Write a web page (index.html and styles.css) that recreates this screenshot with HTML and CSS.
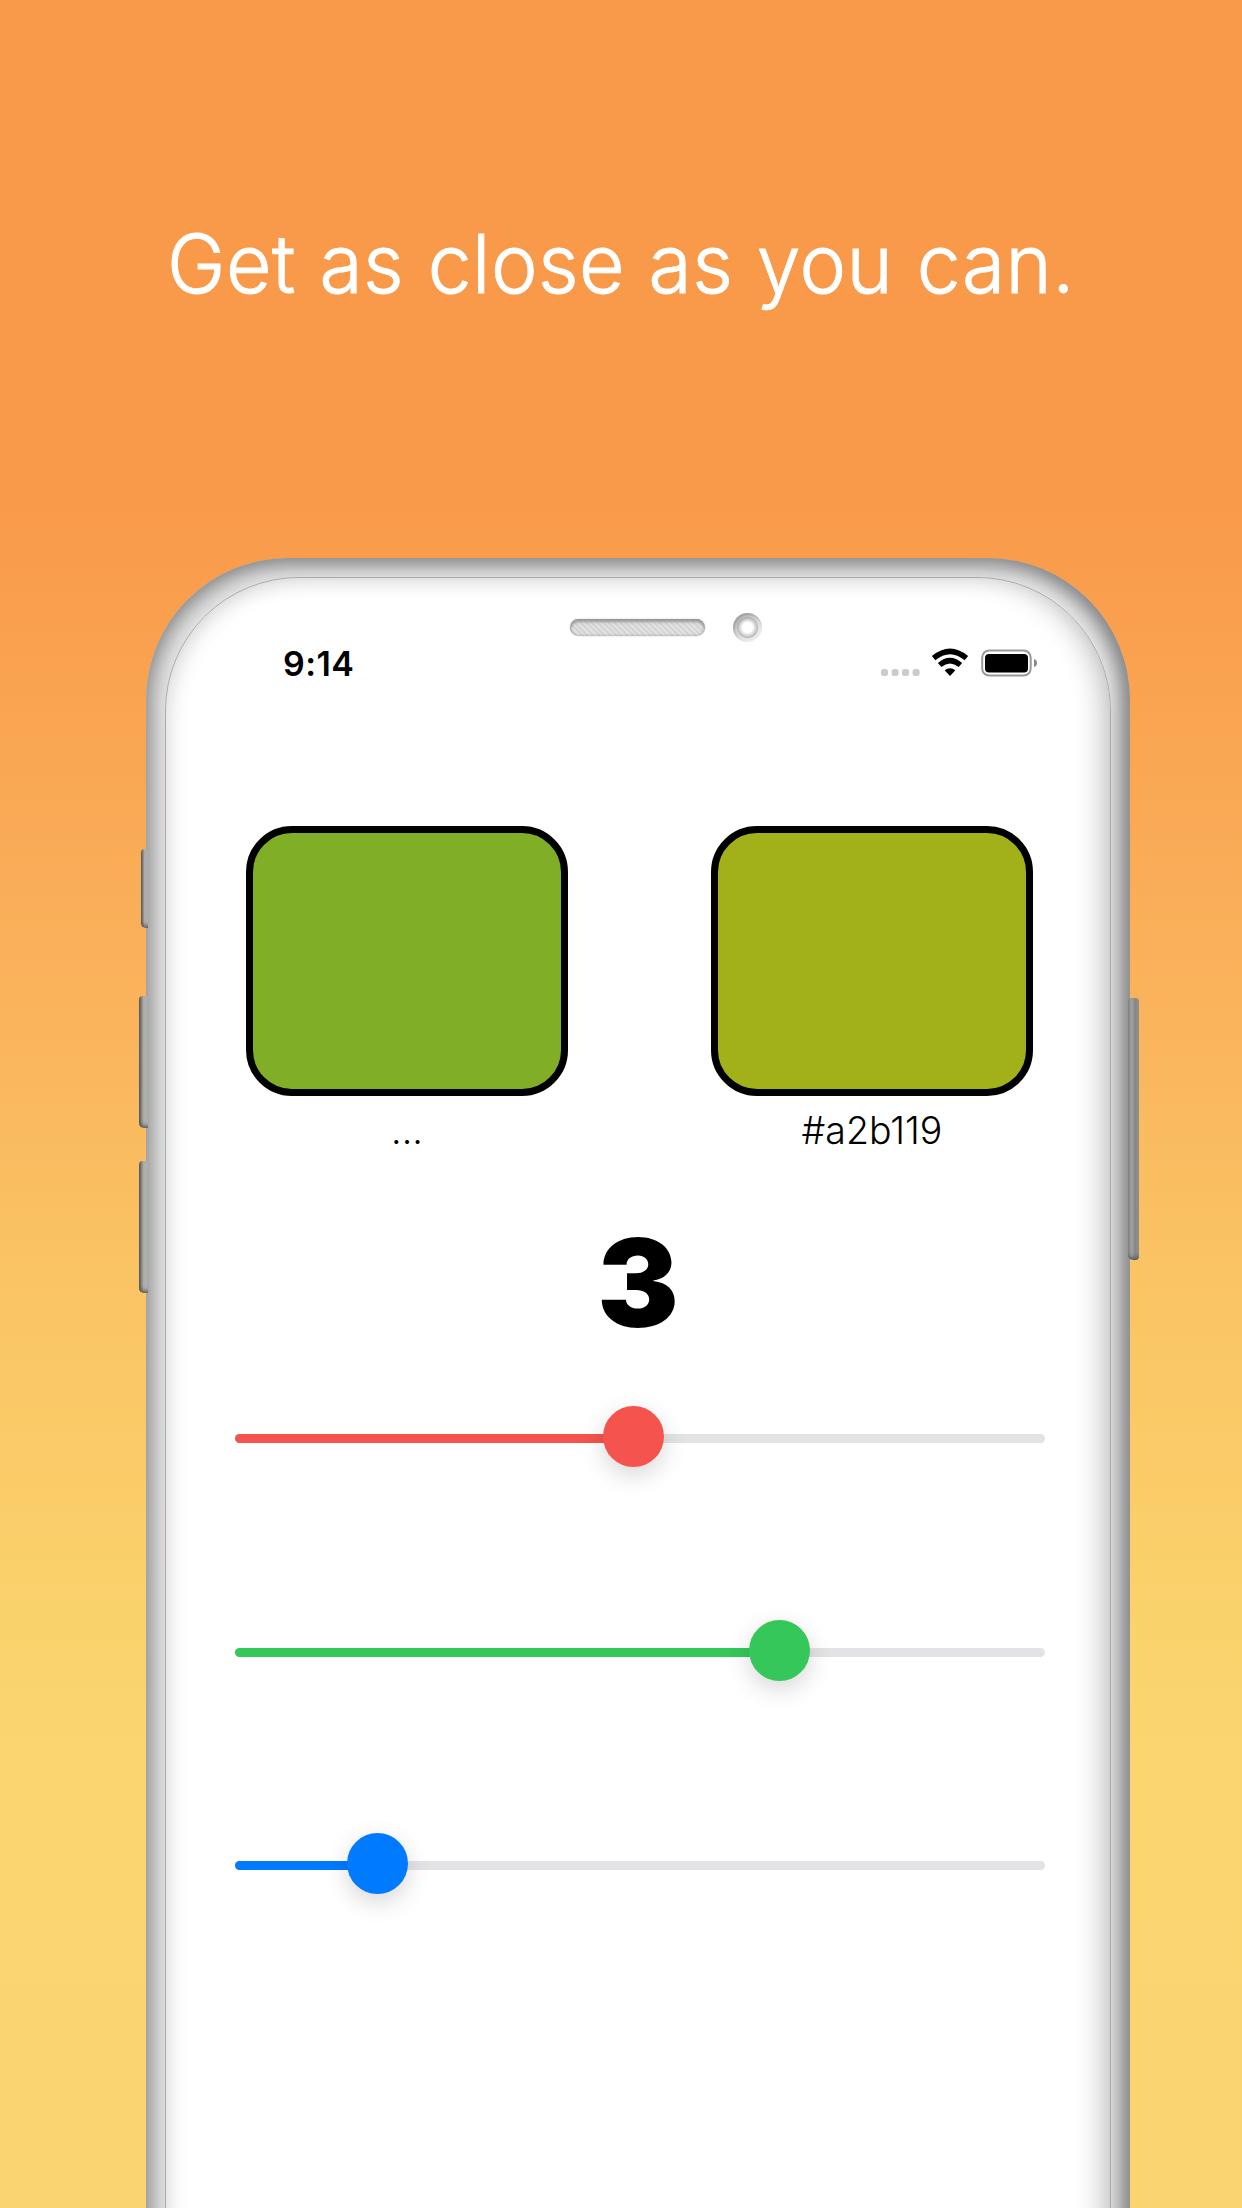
FILE: index.html
```
<!DOCTYPE html>
<html lang="en">
<head>
<meta charset="utf-8">
<title>Color match</title>
<link rel="stylesheet" href="styles.css">
</head>
<body>
<main class="poster">
  <h1 class="headline">Get as close as you can.</h1>
  <section class="phone">
    <span class="side-button mute"></span>
    <span class="side-button volume-up"></span>
    <span class="side-button volume-down"></span>
    <span class="side-button power"></span>
    <div class="screen">
      <div class="sensors"><span class="speaker"></span><span class="camera"></span></div>
      <header class="status">
        <span class="time">9:14</span>
        <svg class="status-icons" width="158" height="30" viewBox="0 0 158 30">
          <g fill="#cbcbcb"><rect x="1" y="21" width="7" height="7" rx="2.5"/><rect x="11.6" y="21" width="7" height="7" rx="2.5"/><rect x="22" y="21" width="7" height="7" rx="2.5"/><rect x="32.6" y="21" width="7" height="7" rx="2.5"/></g>
          <g fill="none" stroke="#000" stroke-width="5.400"><path d="M53.6 10.200Q70 -3.400 86.400 10.200"/><path d="M59.600 17Q70 8.200 80.400 17"/></g>
          <path d="M64.600 22.300Q70 18 75.400 22.300L70 28z"/>
          <rect x="102.200" y="2.500" width="48.500" height="25" rx="7" fill="none" stroke="#999" stroke-width="2"/>
          <rect x="105" y="6" width="43" height="18.500" rx="4"/>
          <path d="M154 11Q157 12 157 15T154 19z" fill="#888"/>
        </svg>
      </header>
      <div class="swatches">
        <figure><div class="swatch target"></div><figcaption class="dots">...</figcaption></figure>
        <figure><div class="swatch guess"></div><figcaption>#a2b119</figcaption></figure>
      </div>
      <div class="count">3</div>
      <div class="sliders">
        <div class="slider red"><span class="fill" style="width:399px"></span><span class="thumb"></span></div>
        <div class="slider green"><span class="fill" style="width:545px"></span><span class="thumb"></span></div>
        <div class="slider blue"><span class="fill" style="width:143px"></span><span class="thumb"></span></div>
      </div>
    </div>
  </section>
</main>
</body>
</html>
```
FILE: styles.css
```
* { box-sizing: border-box; }
body { margin: 0; font-family: Inter, "Liberation Sans", sans-serif; color: #000; }
.poster {
  height: 2208px; overflow: hidden; display: flex; flex-direction: column;
  background: linear-gradient(#f99a4a 0, #f99a4a 500px, #fab05a 950px, #fac564 1300px, #fad26c 1620px, #fad570 1750px, #fad470 100%);
}
.headline {
  height: 558px; margin: 0; padding-top: 215px; flex: none; text-align: center;
  font-size: 81px; line-height: 98px; font-weight: 300; letter-spacing: .5px; word-spacing: 1px; color: #fff; white-space: nowrap;
  -webkit-text-stroke: 1px #fff;
  transform: scaleX(.97);
}
.phone {
  position: relative; width: 984px; height: 1900px; margin-left: 146px; padding: 19px 19px 0 19px; flex: none;
  border-radius: 142px;
  background: #e6e6e6;
  box-shadow: inset 4px 4px 24px #868686, inset -8px 0 20px #828282;
}
.screen {
  height: 1900px; border: 1px solid #aaa; border-radius: 134px; background: #fff;
  display: flex; flex-direction: column;
  box-shadow: inset 12px 8px 24px -14px #ccc, inset -14px 0 30px -10px #b4b4b4;
}
.side-button { position: absolute; background: linear-gradient(90deg, #555, #aaa 50%, #bbb); border-radius: 4px 0 0 5px; box-shadow: inset 0 -4px 4px -2px #555; }
.mute { left: -5px; top: 291px; width: 7px; height: 79px; }
.volume-up { left: -7px; top: 438px; width: 9px; height: 132px; }
.volume-down { left: -7px; top: 603px; width: 9px; height: 132px; }
.power { right: -9px; top: 440px; width: 11px; height: 262px; border-radius: 3px 4px 4px 5px; background: linear-gradient(90deg, #888, #a1a1a1 35%, #858585 65%, #999); }
.sensors { display: flex; align-items: center; gap: 28px; height: 32px; margin: 33px 0 0 404px; }
.speaker {
  width: 135px; height: 17px; border-radius: 9px;
  background: repeating-linear-gradient(45deg, #d4d4d4 0 2px, #e2e2e2 2px 4px);
  box-shadow: inset 0 3px 3px #999, inset 0 0 3px #999, 0 0 2px #ccc;
}
.camera {
  width: 29px; height: 29px; border-radius: 50%;
  background: radial-gradient(circle at 50% 50%, #fff 0 5px, #bbb 10px, #e4e4e4 11px, #f6f6f6 15px);
  box-shadow: inset 2px 3px 4px #999;
}
.status { display: flex; justify-content: space-between; align-items: center; height: 43px; margin: -1px 72px 0 117px; }
.status-icons { margin-bottom: 2px; }
.time { font-size: 34px; font-weight: 600; line-height: 44px; letter-spacing: .4px; }
.swatches { display: flex; justify-content: space-between; margin: 141px 77px 0 80px; }
figure { margin: 0; width: 322px; text-align: center; }
.swatch { height: 270px; border: 7px solid #000; border-radius: 46px; }
.target { background: #80ae26; }
.guess { background: #a2b119; }
figcaption { font-size: 37.5px; font-weight: 300; line-height: 46px; margin-top: 12px; }
.count { text-align: center; font-size: 122px; font-weight: 900; line-height: 146px; margin-top: 56px; }
.sliders { display: flex; flex-direction: column; gap: 152.5px; margin: 50px 65px 0 69px; }
.slider { position: relative; display: flex; align-items: center; height: 61px; --tint: #f4544d; }
.slider::before { content: ""; position: absolute; inset: 28px 0 auto; height: 9px; border-radius: 5px; background: #e3e3e5; }
.fill { position: relative; height: 9px; flex: none; margin-top: 4px; border-radius: 5px; background: var(--tint); }
.thumb { position: relative; width: 61px; height: 61px; flex: none; margin-left: -31px; border-radius: 50%; background: var(--tint); box-shadow: 0 8px 24px rgba(0,0,0,.16); }
.green { --tint: #35c75a; }
.blue { --tint: #007aff; }
```
